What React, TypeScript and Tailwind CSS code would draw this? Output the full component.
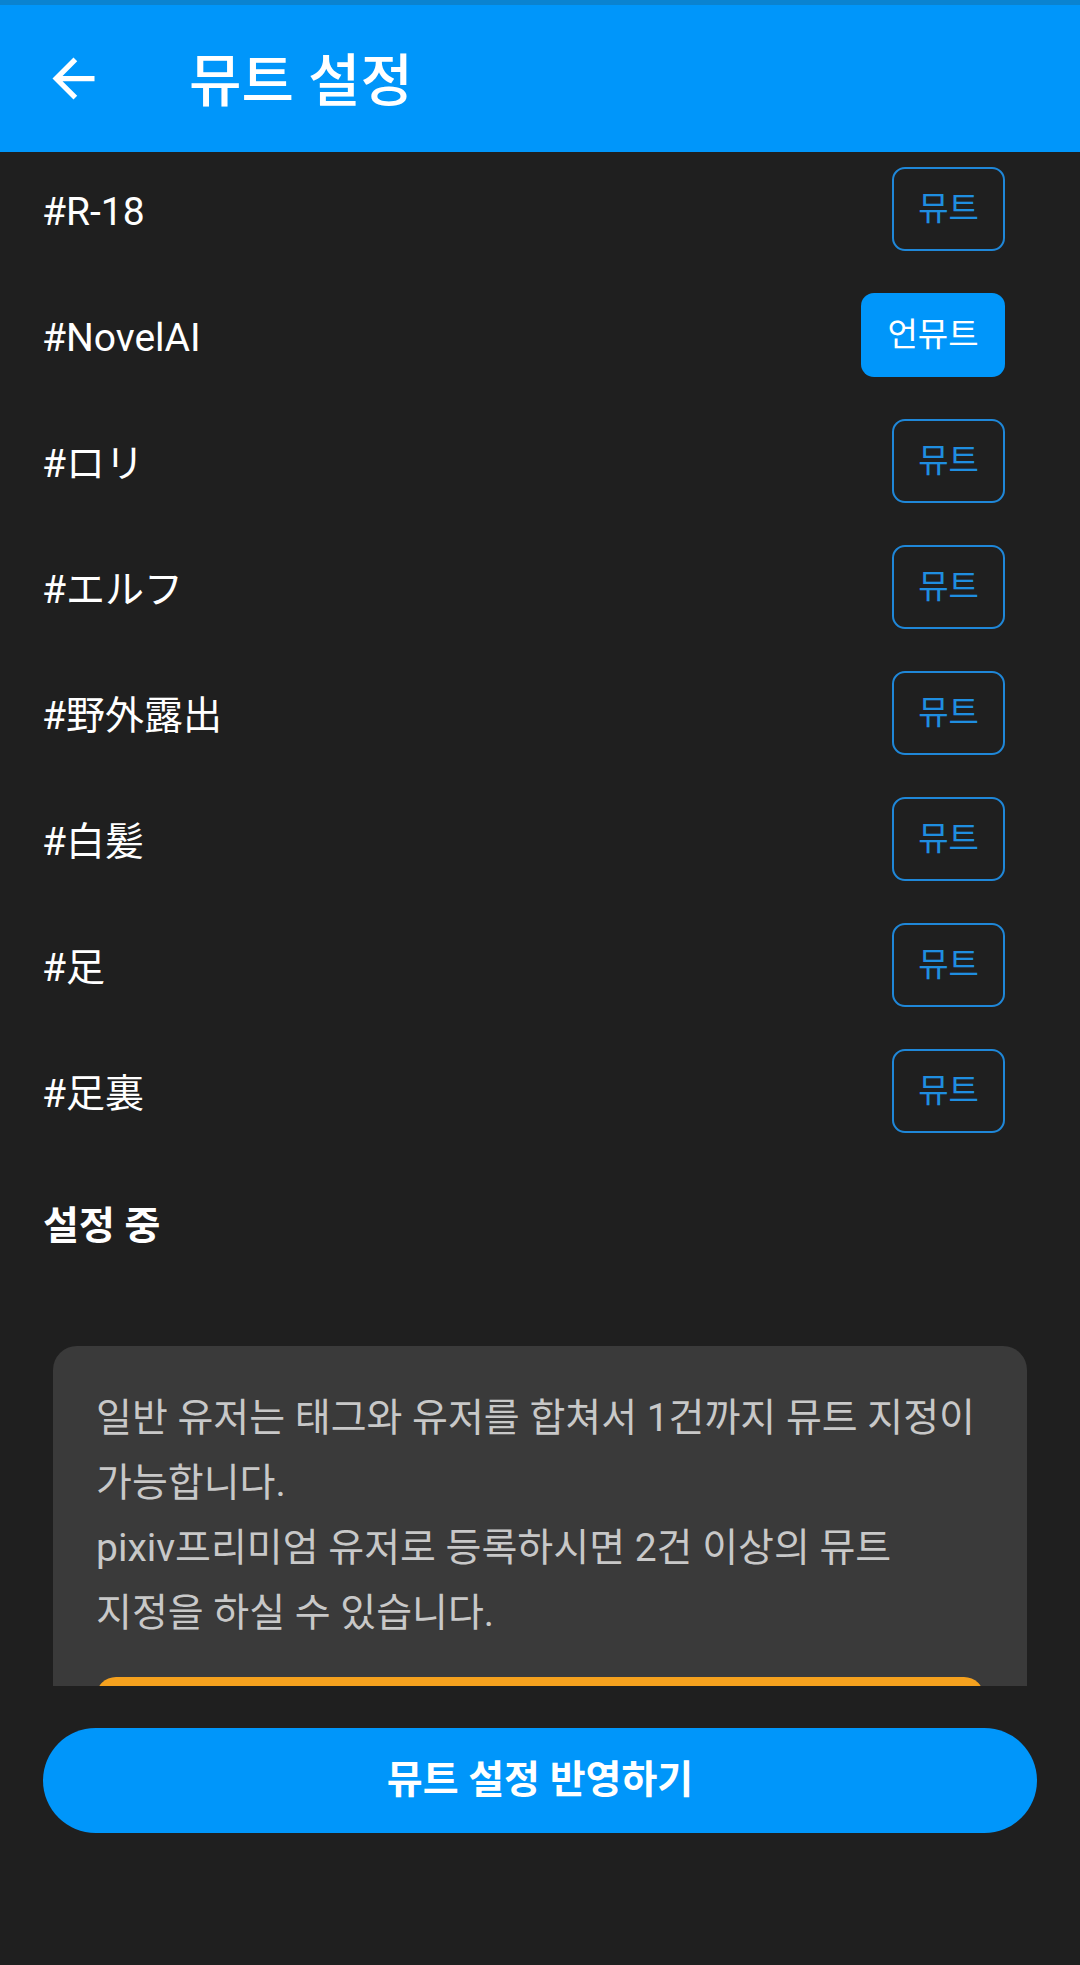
const tags = [
  { name: "#R-18", muted: false },
  { name: "#NovelAI", muted: true },
  { name: "#ロリ", muted: false },
  { name: "#エルフ", muted: false },
  { name: "#野外露出", muted: false },
  { name: "#白髪", muted: false },
  { name: "#足", muted: false },
  { name: "#足裏", muted: false },
];

function BackIcon() {
  return (
    <svg viewBox="0 0 24 24" className="w-[63px] h-[63px]" fill="white">
      <path d="M20 11H7.83l5.59-5.59L12 4l-8 8 8 8 1.41-1.41L7.83 13H20v-2z" />
    </svg>
  );
}

function TagRow({ name, muted }: { name: string; muted: boolean }) {
  return (
    <div className="h-[126px] flex items-center justify-between pl-[42px] pr-[75px]">
      <span className="text-[39px] text-white pt-[6px]">{name}</span>
      {muted ? (
        <button className="w-[144px] h-[84px] rounded-[13px] bg-[#0096fa] text-white text-[33px]">언뮤트</button>
      ) : (
        <button className="w-[113px] h-[84px] rounded-[13px] border-[2.5px] border-[#1f87d8] text-[#1f8ee0] text-[33px]">뮤트</button>
      )}
    </div>
  );
}

export default function App() {
  return (
    <div
      className="w-[1080px] h-[1965px] bg-[#1f1f1f] flex flex-col overflow-hidden"
      style={{ fontFamily: 'Roboto, "Noto Sans CJK KR", sans-serif' }}
    >
      <div className="h-[5px] bg-[#0a83d0]" />
      <header className="h-[147px] bg-[#0096fa] flex items-center">
        <div className="ml-[42px] mr-[84px] flex items-center">
          <BackIcon />
        </div>
        <h1 className="text-[57px] font-medium text-white pt-[6px]">뮤트 설정</h1>
      </header>

      <main className="h-[1534px] overflow-hidden">
        <div className="-mt-[6px]">
          {tags.map((t) => (
            <TagRow key={t.name} name={t.name} muted={t.muted} />
          ))}
        </div>
        <div className="h-[144px] flex items-center pl-[43px]">
          <h2 className="text-[39px] font-bold text-white">설정 중</h2>
        </div>
        <div className="mt-[48px] mx-[53px] rounded-[24px] bg-[#3a3a3a] pt-[40px] px-[43px] pb-[40px]">
          <p className="text-[39px] leading-[65px] text-[#c8c8c8]">
            <span className="block whitespace-nowrap">일반 유저는 태그와 유저를 합쳐서 1건까지 뮤트 지정이</span>
            <span className="block whitespace-nowrap">가능합니다.</span>
            <span className="block whitespace-nowrap">pixiv프리미엄 유저로 등록하시면 2건 이상의 뮤트</span>
            <span className="block whitespace-nowrap">지정을 하실 수 있습니다.</span>
          </p>
          <div className="mt-[31px] h-[105px] rounded-[20px] bg-[#f5a11e]" />
        </div>
      </main>

      <div className="flex-1 px-[43px] pt-[42px]">
        <button className="w-full h-[105px] rounded-full bg-[#0096fa] text-white text-[39px] font-bold">
          뮤트 설정 반영하기
        </button>
      </div>
    </div>
  );
}
